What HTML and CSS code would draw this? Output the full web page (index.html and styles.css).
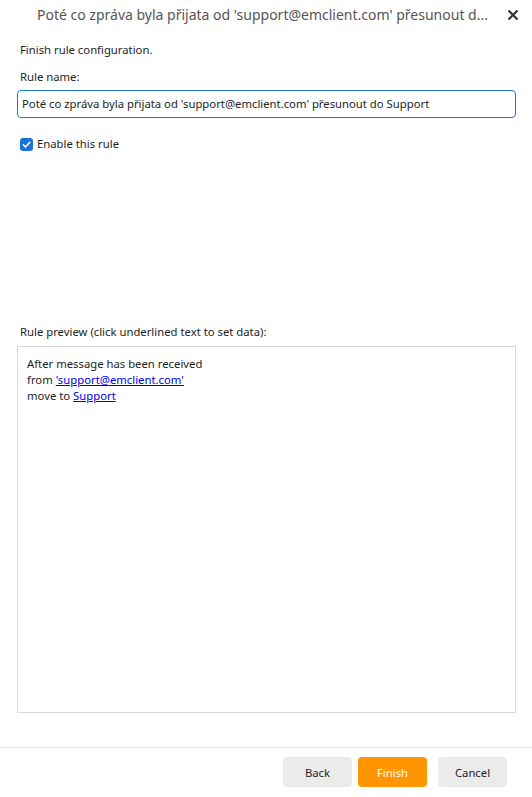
FILE: index.html
```html
<!DOCTYPE html>
<html lang="cs">

<head>
    <meta charset="UTF-8">
    <meta name="viewport" content="width=device-width, initial-scale=1.0">
    <title>Rule</title>
    <link rel="stylesheet" href="styles.css">
</head>

<body>
    <div class="dialog">
        <div class="titlebar">
            <span class="title">Poté co zpráva byla přijata od 'support@emclient.com' přesunout d...</span>
            <span class="close">
                <svg width="12" height="12" viewBox="0 0 12 12">
                    <path d="M1.5 1.5 L10.5 10.5 M10.5 1.5 L1.5 10.5" stroke="#333" stroke-width="2.2" fill="none" />
                </svg>
            </span>
        </div>

        <div class="content">
            <p class="intro">Finish rule configuration.</p>
            <p class="label">Rule name:</p>
            <div class="input">Poté co zpráva byla přijata od 'support@emclient.com' přesunout do Support</div>

            <label class="check">
                <span class="box">
                    <svg width="13" height="13" viewBox="0 0 13 13">
                        <path d="M3.3 6.8 L5.5 9 L9.8 4.3" stroke="#fff" stroke-width="1.6" fill="none"
                            stroke-linecap="round" stroke-linejoin="round" />
                    </svg>
                </span>
                Enable this rule
            </label>

            <p class="label preview-label">Rule preview (click underlined text to set data):</p>
            <div class="preview">
                <div>After message has been received</div>
                <div>from <a href="#">'support@emclient.com'</a></div>
                <div>move to <a href="#">Support</a></div>
            </div>
        </div>

        <div class="footer">
            <button class="btn">Back</button>
            <button class="btn primary">Finish</button>
            <button class="btn cancel">Cancel</button>
        </div>
    </div>
</body>

</html>
```

FILE: styles.css
```css
* {
    margin: 0;
    padding: 0;
    box-sizing: border-box;
}

html,
body {
    height: 100%;
}

body {
    background-color: #fff;
    color: #1e1e1e;
    font-family: "Noto Sans", "Open Sans", sans-serif;
    font-size: 11.3px;
    line-height: 16px;
    overflow: hidden;
}

.dialog {
    height: 797px;
    display: flex;
    flex-direction: column;
}

.titlebar {
    height: 30px;
    display: flex;
    align-items: center;
    padding-left: 37px;
    padding-right: 13px;
}

.title {
    flex: 1;
    min-width: 0;
    font-size: 14px;
    color: #555;
    white-space: nowrap;
}

.close {
    display: flex;
    width: 12px;
    height: 12px;
    flex-shrink: 0;
}

.content {
    flex: 1;
    display: flex;
    flex-direction: column;
    padding: 0 16px 0 17px;
}

.intro {
    margin-top: 12px;
    padding-left: 3px;
}

.label {
    margin-top: 11px;
    padding-left: 3px;
}

.input {
    margin-top: 5px;
    height: 28px;
    border: 1px solid #1a78e0;
    border-radius: 4px;
    padding: 5px 4px;
    white-space: nowrap;
    overflow: hidden;
}

.check {
    margin-top: 18px;
    display: flex;
    align-items: center;
    gap: 4px;
    padding-left: 3px;
}

.box {
    display: flex;
    width: 13px;
    height: 13px;
    border-radius: 3px;
    background-color: #1a73d9;
}

.preview-label {
    margin-top: 172px;
}

.preview {
    flex: 1;
    margin-top: 6px;
    margin-bottom: 34px;
    border: 1px solid #d9d9d9;
    padding: 9px 9px;
}

.preview a {
    color: #0000ee;
    text-decoration: underline;
}

.footer {
    border-top: 1px solid #e6e6e6;
    height: 50px;
    display: flex;
    justify-content: flex-end;
    gap: 6px;
    padding: 9px 25px 0 0;
}

.btn {
    width: 69px;
    height: 30px;
    border: 0;
    border-radius: 4px;
    background-color: #ebebeb;
    color: #1e1e1e;
    font-family: inherit;
    font-size: 11.3px;
}

.primary {
    background-color: #ff9500;
    color: #fff;
}

.cancel {
    margin-left: 5px;
}
```
